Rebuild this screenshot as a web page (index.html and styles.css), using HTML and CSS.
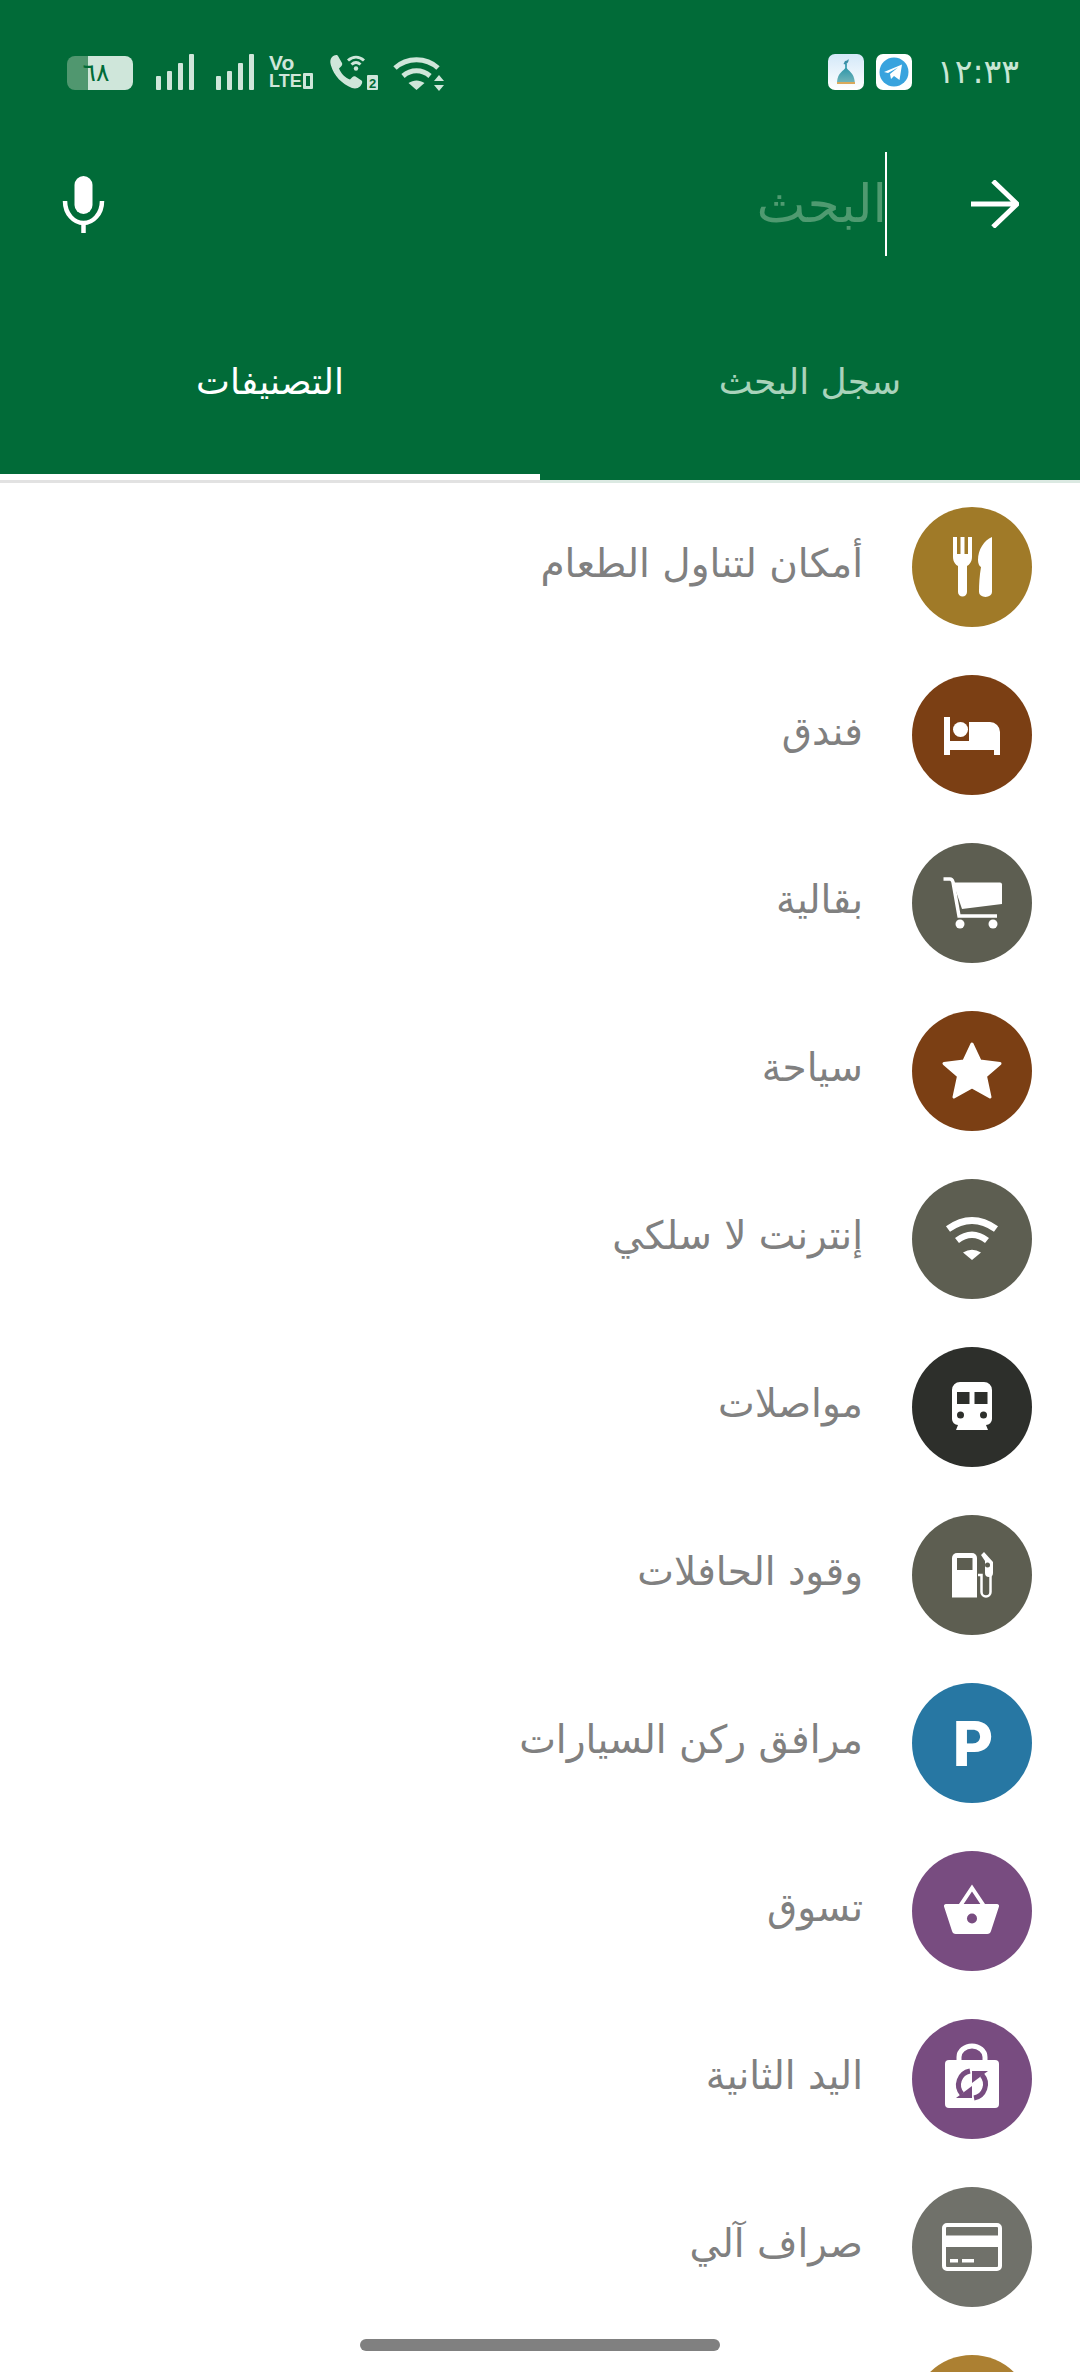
FILE: index.html
```html
<!DOCTYPE html>
<html lang="ar" dir="rtl">
<head>
    <meta charset="UTF-8">
    <meta name="viewport" content="width=device-width, initial-scale=1.0">
    <title>البحث</title>
    <link rel="stylesheet" href="styles.css">
</head>
<body>
    <div class="screen">
        <header class="header">
            <div class="status-bar">
                <div class="status-right">
                    <span class="time">١٢:٣٣</span>
                    <svg class="notif" viewBox="0 0 36 36">
                        <rect width="36" height="36" rx="7" fill="#fff"/>
                        <circle cx="18" cy="18" r="14.500" fill="#38a3de"/>
                        <path d="M8 18 26 10.500 23.500 26 18 22l-3 3-1-5 8-6.500-10 5.500z" fill="#fff"/>
                    </svg>
                    <svg class="notif" viewBox="0 0 36 36">
                        <defs>
                            <linearGradient id="mosqueBg" x1="0" y1="0" x2="0" y2="1">
                                <stop offset="0" stop-color="#d3e8f8"/>
                                <stop offset="1" stop-color="#ffffff"/>
                            </linearGradient>
                            <linearGradient id="dome" x1="0" y1="0" x2="0" y2="1">
                                <stop offset="0" stop-color="#1f8fa6"/>
                                <stop offset="1" stop-color="#6fb3b8"/>
                            </linearGradient>
                        </defs>
                        <rect width="36" height="36" rx="7" fill="url(#mosqueBg)"/>
                        <path d="M17 7a4 4 0 0 0 3.500-2 4 4 0 0 1-5 5z" fill="#3a8ea6"/>
                        <path d="M17.200 10h1.600v4c1 3 7.200 4 8 14H9c.8-10 7-11 8.200-14z" fill="url(#dome)"/>
                        <rect x="9" y="28" width="18" height="2" fill="#d9a95c"/>
                    </svg>
                </div>
                <div class="status-left">
                    <div class="battery"><span>٦٨</span></div>
                    <svg class="signal" viewBox="0 0 38 36">
                        <rect x="0" y="22" width="5" height="14" rx="1"/>
                        <rect x="11" y="17" width="5" height="19" rx="1"/>
                        <rect x="22" y="9" width="5" height="27" rx="1"/>
                        <rect x="33" y="0" width="5" height="36" rx="1"/>
                    </svg>
                    <svg class="signal signal-2" viewBox="0 0 38 36">
                        <rect x="0" y="22" width="5" height="14" rx="1"/>
                        <rect x="11" y="17" width="5" height="19" rx="1"/>
                        <rect x="22" y="9" width="5" height="27" rx="1"/>
                        <rect x="33" y="0" width="5" height="36" rx="1"/>
                    </svg>
                    <div class="volte">
                        <span class="vo">Vo</span>
                        <span class="lte">LTE<i class="lte-box"></i></span>
                    </div>
                    <svg class="call-wifi" viewBox="0 0 48 36">
                        <path d="M2 3c2-2 5-3 6-1l4 7c.6 1.200 0 2.500-1 3.500l-2 2c2 5 6 9 11 11l2-2c1-1 2.300-1.600 3.500-1l6 4c1.500 1 .5 4-1.500 6-2 2-5 2.500-8 1.500C12 30 4 22 .8 11 0 8 0 5 2 3z" class="fill"/>
                        <path d="M18 6.500c5-4.500 11-4.500 16 0M21.500 10.500c3-2.700 6-2.700 9 0" class="line thin"/>
                        <circle cx="26" cy="14.500" r="2.200" class="fill"/>
                        <rect x="37" y="21" width="11" height="15" rx="1" class="fill"/>
                        <text x="42.500" y="33.500" class="sim">2</text>
                    </svg>
                    <svg class="wifi-status" viewBox="0 0 51 37">
                        <path d="M2 14C14 3 33 3 45 14" class="line"/>
                        <path d="M10 22C18 15 29 15 37 22" class="line"/>
                        <path d="M23.500 36 15.500 29c5-3.500 11-3.500 16 0z" class="fill"/>
                        <path d="M46 21l5 6h-10zM46 37l5-6h-10z" class="fill"/>
                    </svg>
                </div>
            </div>

            <div class="search-row">
                <svg class="arrow" viewBox="0 0 48 48">
                    <path d="M0 24H46M22 1 46 24 22 47"/>
                </svg>
                <div class="search-field">
                    <span class="caret"></span>
                    <span class="placeholder">البحث</span>
                </div>
                <svg class="mic" viewBox="0 0 43 57">
                    <rect x="12.500" y="0" width="18" height="38" rx="9" fill="#fff"/>
                    <path d="M3 25C3 38 12 47 21.500 47S40 38 40 25M21.500 47V57"/>
                </svg>
            </div>

            <div class="tabs">
                <div class="tab">سجل البحث</div>
                <div class="tab tab-active">التصنيفات</div>
            </div>
        </header>

        <div class="header-line"></div>

        <ul class="list">
            <li class="row">
                <svg class="cat c-gold" viewBox="0 0 120 120">
                    <path d="M41 30h4v17h3.500V30h4v17H56V30h4v20c0 5-3 8-5 9v26a4.500 4.500 0 0 1-9 0V59c-2-1-5-4-5-9z"/>
                    <path d="M80 31V85a6.500 5 0 0 1-13 0c0-8 .5-16 2-25-2-1-3-4-3-7 0-10 6-20 14-23z"/>
                </svg>
                <span class="label">أمكان لتناول الطعام</span>
            </li>
            <li class="row">
                <svg class="cat c-brown" viewBox="0 0 120 120">
                    <path d="M32 42h6v24h19V47h21a10 10 0 0 1 10 10v23h-6v-5H38v5h-6z"/>
                    <ellipse cx="48.500" cy="54.500" rx="7.500" ry="7.500"/>
                </svg>
                <span class="label">فندق</span>
            </li>
            <li class="row">
                <svg class="cat c-grey" viewBox="0 0 120 120">
                    <path d="M41 39.500H88q2 0 2 2V61L50 66z"/>
                    <path d="M31.500 36H38q2 0 3 3L47 73H85" class="stroke" stroke-width="3.500"/>
                    <circle cx="48" cy="81" r="4.500"/>
                    <circle cx="81" cy="81" r="4.500"/>
                </svg>
                <span class="label">بقالية</span>
            </li>
            <li class="row">
                <svg class="cat c-brown" viewBox="0 0 120 120">
                    <path d="M60 33 68 50 88 52.500 73.500 65 78 86 60 76 42 86 46.500 65 32 52.500 52 50z" class="solid"/>
                </svg>
                <span class="label">سياحة</span>
            </li>
            <li class="row">
                <svg class="cat c-grey" viewBox="0 0 120 120">
                    <path d="M36 50Q60 33 84 50" class="stroke" stroke-width="7"/>
                    <path d="M45 61.500Q60 50 75 61.500" class="stroke" stroke-width="6.500"/>
                    <path d="M60 81 51 73.500Q60 68 69 73.500z"/>
                </svg>
                <span class="label">إنترنت لا سلكي</span>
            </li>
            <li class="row">
                <svg class="cat c-dark" viewBox="0 0 120 120">
                    <path d="M48 35H72a8 8 0 0 1 8 8V72a6 6 0 0 1-6 6L76 83H44L46 78a6 6 0 0 1-6-6V43a8 8 0 0 1 8-8z"/>
                    <rect x="45" y="45" width="12.500" height="12" class="hole"/>
                    <rect x="62.500" y="45" width="13" height="12" class="hole"/>
                    <circle cx="48.500" cy="68" r="3.500" class="hole"/>
                    <circle cx="71.500" cy="68" r="3.500" class="hole"/>
                </svg>
                <span class="label">مواصلات</span>
            </li>
            <li class="row">
                <svg class="cat c-grey" viewBox="0 0 120 120">
                    <path d="M45 38H60a5 5 0 0 1 5 5V82.500H40V43a5 5 0 0 1 5-5z"/>
                    <rect x="45" y="43" width="15.500" height="12" class="hole"/>
                    <path d="M66 60H69.500V77a4.500 4.500 0 0 0 9 0V50" class="stroke" stroke-width="2.500"/>
                    <path d="M69 40l3-3 9 10V58a4 4 0 0 1-8 0V46z"/>
                    <circle cx="75.500" cy="50" r="2.500" class="hole"/>
                </svg>
                <span class="label">وقود الحافلات</span>
            </li>
            <li class="row">
                <svg class="cat c-blue" viewBox="0 0 120 120">
                    <text x="61" y="82.500" class="cat-letter">P</text>
                </svg>
                <span class="label">مرافق ركن السيارات</span>
            </li>
            <li class="row">
                <svg class="cat c-purple" viewBox="0 0 120 120">
                    <path d="M48 55 60 37 72 55" class="stroke" stroke-width="4"/>
                    <path d="M34 53H85a2 2 0 0 1 2 2.500L79 80a4 4 0 0 1-4 3H44a4 4 0 0 1-4-3L32 55.500a2 2 0 0 1 2-2.500z"/>
                    <circle cx="60" cy="67.500" r="5" class="hole"/>
                </svg>
                <span class="label">تسوق</span>
            </li>
            <li class="row">
                <svg class="cat c-purple" viewBox="0 0 120 120">
                    <path d="M47 43V38a13 11 0 0 1 26 0V43" class="stroke" stroke-width="5"/>
                    <rect x="33" y="41" width="54" height="48" rx="4"/>
                    <g class="recycle">
                        <path d="M58 52A14 14 0 0 0 50 75"/>
                        <path d="M44 79H60V67z" class="hole"/>
                    </g>
                    <g class="recycle" transform="rotate(180 60 65.500)">
                        <path d="M58 52A14 14 0 0 0 50 75"/>
                        <path d="M44 79H60V67z" class="hole"/>
                    </g>
                </svg>
                <span class="label">اليد الثانية</span>
            </li>
            <li class="row">
                <svg class="cat c-stone" viewBox="0 0 120 120">
                    <rect x="32" y="38" width="56" height="44" rx="3" class="stroke" stroke-width="4"/>
                    <rect x="32" y="48.500" width="56" height="11.500"/>
                    <rect x="38" y="72" width="8" height="3.500"/>
                    <rect x="50" y="72" width="12" height="3.500"/>
                </svg>
                <span class="label">صراف آلي</span>
            </li>
            <li class="row">
                <svg class="cat c-ochre" viewBox="0 0 120 120"></svg>
            </li>
        </ul>

        <div class="home-bar"></div>
    </div>
</body>
</html>
```

FILE: styles.css
```css
html, body {
    margin: 0;
    padding: 0;
    background: #fff;
}

body {
    font-family: 'DejaVu Sans', sans-serif;
}

.screen {
    position: relative;
    width: 1080px;
    height: 2372px;
    overflow: hidden;
}

.header {
    height: 480px;
    background: #016b38;
    display: flex;
    flex-direction: column;
}

/* status bar */
.status-bar {
    height: 100px;
    padding: 54px 61px 0 67px;
    box-sizing: border-box;
    display: flex;
    justify-content: space-between;
    align-items: flex-start;
}

.status-right {
    display: flex;
    align-items: center;
    height: 36px;
}

.time {
    margin-left: 25px;
    font-size: 33px;
    line-height: 30px;
    color: #c8e6d4;
    white-space: nowrap;
}

.notif {
    width: 36px;
    height: 36px;
    margin-left: 12px;
}

.notif:last-child {
    margin-left: 0;
}

.status-left {
    direction: ltr;
    display: flex;
    align-items: flex-start;
    fill: #cfe6da;
}

.status-left .fill {
    fill: #cfe6da;
}

.status-left .line {
    fill: none;
    stroke: #cfe6da;
    stroke-width: 5;
}

.status-left .thin {
    stroke-width: 3;
}

.battery {
    width: 66px;
    height: 34px;
    margin-top: 2px;
    border-radius: 8px;
    background: linear-gradient(to right, #50976f 32%, #cfe6da 32%);
    color: #016b38;
    font-size: 25px;
    line-height: 34px;
    text-align: center;
    direction: rtl;
}

.battery span {
    display: block;
    padding-right: 8px;
}

.signal {
    width: 38px;
    height: 36px;
    margin-left: 23px;
}

.signal-2 {
    margin-left: 22px;
}

.volte {
    width: 47px;
    margin-left: 15px;
    color: #cfe6da;
    font-family: 'Liberation Sans', sans-serif;
    font-weight: bold;
    display: flex;
    flex-direction: column;
}

.vo {
    font-size: 21px;
    line-height: 18px;
}

.lte {
    font-size: 18px;
    line-height: 18px;
    display: flex;
    align-items: center;
}

.lte-box {
    width: 4px;
    height: 10px;
    margin-left: 1px;
    border: 3px solid #cfe6da;
    border-radius: 1px;
    flex: none;
}

.call-wifi {
    width: 48px;
    height: 36px;
    margin-left: 14px;
}

.sim {
    font-family: 'Liberation Sans', sans-serif;
    font-size: 13px;
    font-weight: bold;
    text-anchor: middle;
    fill: #016b38;
}

.wifi-status {
    width: 51px;
    height: 37px;
    margin-left: 15px;
}

/* search */
.search-row {
    height: 208px;
    padding: 0 61px 0 62px;
    box-sizing: border-box;
    display: flex;
    align-items: center;
}

.arrow {
    width: 48px;
    height: 48px;
    margin-left: 84px;
    fill: none;
    stroke: #fff;
    stroke-width: 5;
}

.search-field {
    flex: 1;
    display: flex;
    align-items: center;
    height: 104px;
}

.caret {
    width: 2px;
    height: 104px;
    background: #fff;
    margin-left: -2px;
}

.placeholder {
    font-size: 52px;
    color: #4f9a70;
}

.mic {
    width: 43px;
    height: 57px;
    fill: none;
    stroke: #fff;
    stroke-width: 4.500;
}

.mic rect {
    stroke: none;
}

/* tabs */
.tabs {
    flex: 1;
    display: grid;
    grid-template-columns: 1fr 1fr;
}

.tab {
    display: flex;
    align-items: center;
    justify-content: center;
    padding-bottom: 26px;
    font-size: 36px;
    color: #a9d3bb;
}

.tab-active {
    color: #fff;
    border-bottom: 6px solid #fff;
    padding-bottom: 20px;
}

.header-line {
    height: 3px;
    background: linear-gradient(to right, #e2e2e2 50%, #dbe9e2 50%);
}

/* list */
.list {
    list-style: none;
    margin: 0;
    padding: 0;
}

.row {
    height: 168px;
    padding-right: 48px;
    display: flex;
    align-items: center;
    gap: 49px;
}

.cat {
    width: 120px;
    height: 120px;
    flex: none;
    border-radius: 50%;
    fill: #fff;
}

.c-gold { background: #a07a28; }
.c-brown { background: #7b3f14; }
.c-grey { background: #5d5e51; }
.c-dark { background: #2d2f2b; }
.c-blue { background: #2777a3; }
.c-purple { background: #784c80; }
.c-stone { background: #70716a; }
.c-ochre { background: #ac8032; }

.cat .stroke {
    fill: none;
    stroke: #fff;
}

.cat .solid {
    stroke: #fff;
    stroke-width: 3;
    stroke-linejoin: round;
}

.cat-letter {
    font-family: 'Inter', sans-serif;
    font-size: 62px;
    font-weight: 800;
    text-anchor: middle;
    direction: ltr;
}

.c-dark .hole { fill: #2d2f2b; }
.c-grey .hole { fill: #5d5e51; }
.c-purple .hole { fill: #784c80; }

.recycle path:first-child {
    fill: none;
    stroke: #784c80;
    stroke-width: 5;
}

.label {
    font-size: 39px;
    padding-bottom: 8px;
    color: #808080;
    white-space: nowrap;
}

.home-bar {
    position: absolute;
    left: 360px;
    top: 2339px;
    width: 360px;
    height: 12px;
    border-radius: 6px;
    background: #808080;
}
```
